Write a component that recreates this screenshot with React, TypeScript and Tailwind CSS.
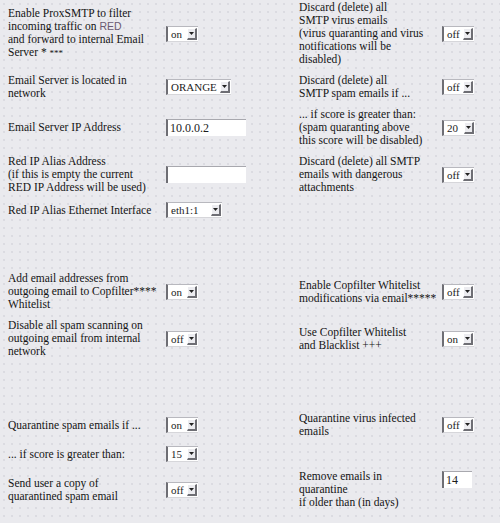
import React from 'react';

function Select({ value, w }: { value: string; w: string }) {
  return (
    <div
      className={`flex h-[16px] ${w} items-stretch border-t border-l-2 border-b border-t-[#b8b8be] border-l-[#6e6e74] border-b-[#d6d6da] bg-white`}
    >
      <span className="flex-1 overflow-hidden pl-[3px] text-[11px] leading-[14px] text-[#1c1c1c]">{value}</span>
      <span className="my-[1px] mr-[1px] flex w-[10px] items-center justify-center border-t border-l border-r-2 border-b-2 border-t-white border-l-white border-r-[#6e6e74] border-b-[#6e6e74] bg-[#ececf0]">
        <svg width="5" height="3" viewBox="0 0 5 3">
          <path d="M0 0h5L2.5 3z" fill="#222" />
        </svg>
      </span>
    </div>
  );
}

function Input({ value, w }: { value: string; w: string }) {
  return (
    <div
      className={`h-[17px] ${w} border-t border-l-2 border-t-[#a8a8ae] border-l-[#6e6e74] bg-white pl-[2px] text-[12px] leading-[16px] text-[#1c1c1c]`}
    >
      {value}
    </div>
  );
}

function Label({ lines }: { lines: React.ReactNode[] }) {
  return (
    <div className="whitespace-nowrap text-[11.5px] leading-[13px] text-[#141414]">
      {lines.map((l, i) => (
        <div key={i}>{l}</div>
      ))}
    </div>
  );
}

const Empty = () => <div />;

export default function App() {
  const grid = 'grid grid-cols-[158px_133px_143px_1fr] items-center gap-y-2';
  return (
    <div className="min-h-screen w-full bg-[#eaeaee] bg-[radial-gradient(circle,#d2d2da_0.6px,transparent_0.9px)] bg-[length:8px_8px] pl-2 pt-[1px] [font-family:'Liberation_Serif','DejaVu_Serif',serif]">
      {/* ProxSMTP / virus / spam discard settings */}
      <div className={grid}>
        <Label
          lines={[
            'Enable ProxSMTP to filter',
            <>
              incoming traffic on{' '}
              <span className="text-[10.5px] text-[#6a5a72] [font-family:'Liberation_Sans',sans-serif]">RED</span>
            </>,
            'and forward to internal Email',
            <>
              Server * <span className="text-[9px]">***</span>
            </>,
          ]}
        />
        <Select value="on" w="w-[32px]" />
        <Label
          lines={[
            'Discard (delete) all',
            'SMTP virus emails',
            '(virus quaranting and virus',
            'notifications will be',
            'disabled)',
          ]}
        />
        <Select value="off" w="w-[32px]" />

        <Label lines={['Email Server is located in', 'network']} />
        <Select value="ORANGE" w="w-[65px]" />
        <Label lines={['Discard (delete) all', 'SMTP spam emails if ...']} />
        <Select value="off" w="w-[32px]" />

        <Label lines={['Email Server IP Address']} />
        <Input value="10.0.0.2" w="w-[80px]" />
        <Label
          lines={[
            '... if score is greater than:',
            '(spam quaranting above',
            'this score will be disabled)',
          ]}
        />
        <Select value="20" w="w-[33px]" />

        <Label
          lines={[
            'Red IP Alias Address',
            '(if this is empty the current',
            'RED IP Address will be used)',
          ]}
        />
        <Input value="" w="w-[80px]" />
        <Label lines={['Discard (delete) all SMTP', 'emails with dangerous', 'attachments']} />
        <Select value="off" w="w-[32px]" />

        <Label lines={['Red IP Alias Ethernet Interface']} />
        <Select value="eth1:1" w="w-[56px]" />
        <Empty />
        <Empty />
      </div>

      {/* Whitelist settings */}
      <div className={`${grid} mt-[54px]`}>
        <Label
          lines={['Add email addresses from', 'outgoing email to Copfilter****', 'Whitelist']}
        />
        <Select value="on" w="w-[32px]" />
        <Label lines={['Enable Copfilter Whitelist', 'modifications via email*****']} />
        <Select value="off" w="w-[32px]" />

        <Label
          lines={['Disable all spam scanning on', 'outgoing email from internal', 'network']}
        />
        <Select value="off" w="w-[32px]" />
        <Label lines={['Use Copfilter Whitelist', 'and Blacklist +++']} />
        <Select value="on" w="w-[32px]" />
      </div>

      {/* Quarantine settings */}
      <div className={`${grid} mt-[54px]`}>
        <Label lines={['Quarantine spam emails if ...']} />
        <Select value="on" w="w-[32px]" />
        <Label lines={['Quarantine virus infected', 'emails']} />
        <Select value="off" w="w-[32px]" />

        <Label lines={['... if score is greater than:']} />
        <Select value="15" w="w-[32px]" />
        <Empty />
        <Empty />

        <Label lines={['Send user a copy of', 'quarantined spam email']} />
        <Select value="off" w="w-[32px]" />
        <Label lines={['Remove emails in', 'quarantine', 'if older than (in days)']} />
        <div className="self-start pt-[1px]">
          <Input value="14" w="w-[30px]" />
        </div>
      </div>
    </div>
  );
}
